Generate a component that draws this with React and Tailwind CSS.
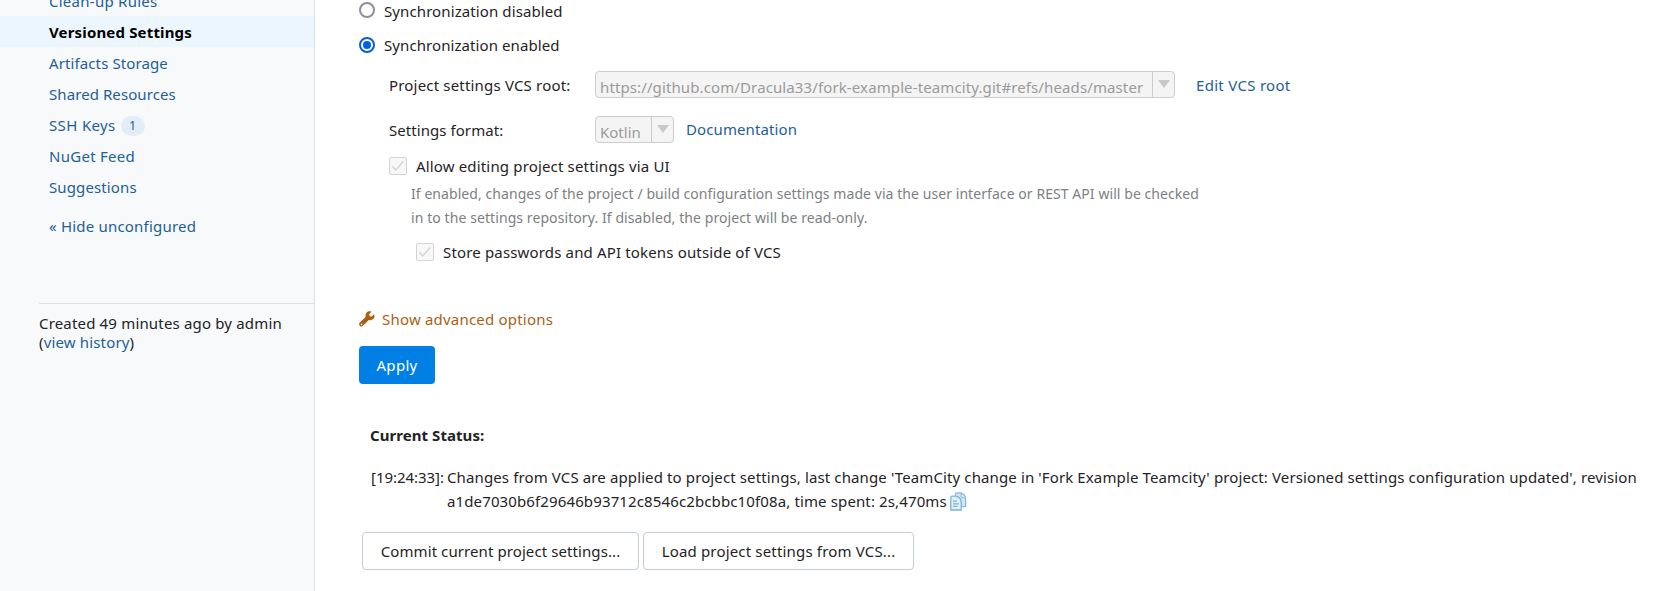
import React from "react";

const NAV = [
  { label: "Artifacts Storage", track: "tracking-[0.11px]" },
  { label: "Shared Resources", track: "tracking-[0.08px]" },
  { label: "SSH Keys", track: "tracking-[0.36px]", count: 1 },
  { label: "NuGet Feed", track: "tracking-[0.27px]" },
  { label: "Suggestions", track: "tracking-[0.12px]" },
];

function Sidebar() {
  return (
    <aside className="flex w-[315px] shrink-0 flex-col border-r border-[#dde0e5] bg-[#f7f9fb]">
      <nav className="flex flex-col text-[#1f6096]">
        <div className="-mt-[15px] flex h-[31px] items-center pl-[49px] pt-[2px]">
          <a className="tracking-[0.26px]">Clean-up Rules</a>
        </div>
        <div className="flex h-[31px] items-center bg-[#ebf6ff] pl-[49px] pt-[2px] font-bold text-black">
          <span className="tracking-[0.16px]">Versioned Settings</span>
        </div>
        {NAV.map((n) => (
          <div key={n.label} className="flex h-[31px] items-center pl-[49px] pt-[2px]">
            <a className={n.track}>{n.label}</a>
            {n.count && (
              <span className="ml-[5px] flex h-5 w-6 items-center justify-center rounded-full bg-[#e4edf7] text-[12.5px] leading-5">
                {n.count}
              </span>
            )}
          </div>
        ))}
        <div className="mt-2 flex h-[31px] items-center pl-[49px] pt-[2px]">
          <a className="tracking-[0.2px]">« Hide unconfigured</a>
        </div>
      </nav>
      <div className="ml-[39px] mt-[62px] border-t border-[#dde0e5] pt-[10px] leading-[19px] text-[#1f2326]">
        <div className="tracking-[0.17px]">Created 49 minutes ago by admin</div>
        <div className="tracking-[0.16px]">
          (<a className="text-[#1f6096]">view history</a>)
        </div>
      </div>
    </aside>
  );
}

function Radio({ checked, label, track }) {
  return (
    <div className="flex h-[22px] items-center">
      <span
        className={
          checked
            ? "mr-[9px] flex size-4 items-center justify-center rounded-full border-2 border-[#0060df]"
            : "mr-[9px] flex size-4 -translate-y-px items-center justify-center rounded-full border-2 border-[#8f8f9d]"
        }
      >
        {checked && <span className="size-2 rounded-full bg-[#0060df]" />}
      </span>
      <span className={track}>{label}</span>
    </div>
  );
}

function Check() {
  return (
    <svg width="18" height="18" viewBox="0 0 18 18" fill="none" className="mr-[9px] shrink-0">
      <rect x="0.5" y="0.5" width="17" height="17" rx="1.5" fill="#f8f8f8" stroke="#d4d4d6" />
      <path d="M3.2 9.3L6.8 13L14.2 4.5" stroke="#d4d4d6" strokeWidth="1.4" />
    </svg>
  );
}

function Select({ children, text, arrow }) {
  return (
    <div className="flex h-[27px] overflow-hidden rounded-[4px] border border-[#cdcdcd] bg-[#f4f4f4] text-[#9b9b9b]">
      <div className={`pl-1 leading-[30px] ${text}`}>{children}</div>
      <div className={`flex items-center justify-center border-l border-[#cdcdcd] pb-px ${arrow}`}>
        <svg width="12" height="8" viewBox="0 0 12 8">
          <path d="M0 0H12L6 8Z" fill="#c8c8c8" />
        </svg>
      </div>
    </div>
  );
}

function CopyIcon() {
  return (
    <svg width="17" height="19" viewBox="0 0 17 19" fill="none" className="ml-[3px] mt-[1px] shrink-0">
      <path d="M5.5 3.5V2Q5.5 0.8 6.7 0.8H10.5Q15.6 2.2 15.6 7V14.6H11.5" fill="#cfe5f4" stroke="#8bbbdb" strokeWidth="1.3" />
      <path d="M10.5 1Q12 3.2 11.2 5.2Q13.5 5 15.5 7" fill="#eef7fc" stroke="#8bbbdb" strokeWidth="1" />
      <path d="M0.8 5.4Q0.8 4.2 2 4.2H6Q11.2 5.6 11.2 10.6V18H0.8Z" fill="#e0f0fa" stroke="#7db3d6" strokeWidth="1.3" />
      <path d="M3 9.2H7M3 11.8H9M3 14.4H7.5" stroke="#7db3d6" strokeWidth="1.2" />
    </svg>
  );
}

export default function App() {
  return (
    <div className="flex h-[591px] w-[1659px] overflow-hidden whitespace-nowrap bg-white font-['Noto_Sans','Open_Sans',sans-serif] text-[15px] text-[#1f2326]">
      <Sidebar />
      <main className="flex flex-col items-start pl-[44px]">
        <Radio label="Synchronization disabled" track="tracking-[0.1px]" />
        <div className="mt-3">
          <Radio checked label="Synchronization enabled" track="tracking-[0.08px]" />
        </div>

        <div className="ml-[30px] mt-[15px] flex h-[27px] items-center">
          <span className="w-[206px] pt-[2px] tracking-[0.18px]">Project settings VCS root:</span>
          <Select text="w-[556px] tracking-[0.115px]" arrow="w-[22px]">
            https://github.com/Dracula33/fork-example-teamcity.git#refs/heads/master
          </Select>
          <a className="ml-[21px] pt-[2px] tracking-[0.3px] text-[#1f6096]">Edit VCS root</a>
        </div>

        <div className="ml-[30px] mt-[18px] flex h-[27px] items-center">
          <span className="w-[206px] pt-[2px] tracking-[0.06px]">Settings format:</span>
          <Select text="w-[55px]" arrow="w-[22px]">Kotlin</Select>
          <a className="ml-[12px] tracking-[0.1px] text-[#1f6096]">Documentation</a>
        </div>

        <div className="ml-[30px] mt-3 flex h-[22px] items-center">
          <Check />
          <span className="tracking-[0.16px]">Allow editing project settings via UI</span>
        </div>
        <div className="ml-[52px] mt-[5px] text-[14px] leading-6 text-[#7c7f83]">
          <div className="tracking-[0.066px]">
            If enabled, changes of the project / build configuration settings made via the user interface or REST API will be checked
          </div>
          <div className="tracking-[0.085px]">
            in to the settings repository. If disabled, the project will be read-only.
          </div>
        </div>
        <div className="ml-[57px] mt-[11px] flex h-[22px] items-center">
          <Check />
          <span className="tracking-[0.157px]">Store passwords and API tokens outside of VCS</span>
        </div>

        <div className="mt-[45px] flex h-[22px] items-center text-[#ab5f12]">
          <svg width="16" height="16" viewBox="0 0 16 16" className="mr-[7px]">
            <path
              d="M15.2 3.3L12.7 5.6L10.6 5.2L10.2 3.2L12.5 0.7C10.7 0 8.7 0.4 7.5 1.8C6.5 3 6.3 4.4 6.8 5.8L0.8 11.6C-0.1 12.6 -0.1 14 0.8 14.9C1.7 15.8 3.1 15.7 4 14.8L9.8 8.9C11.3 9.5 13 9.2 14.2 8.1C15.4 6.8 15.9 5 15.2 3.3ZM2.6 14.2A0.9 0.9 0 1 1 2.6 12.4A0.9 0.9 0 0 1 2.6 14.2Z"
              fill="currentColor"
            />
          </svg>
          <span className="tracking-[0.2px]">Show advanced options</span>
        </div>

        <button className="mt-4 h-[38px] w-[76px] rounded-[4px] bg-[#0080e5] tracking-[0.3px] text-white">
          Apply
        </button>

        <div className="ml-[11px] mt-10 h-[22px] font-bold leading-[22px] tracking-[0.06px]">
          Current Status:
        </div>

        <div className="ml-[12px] mt-[19px] flex leading-6">
          <span className="w-[76px] tracking-[-0.04px]">[19:24:33]:</span>
          <div>
            <div className="tracking-[0.12px]">
              Changes from VCS are applied to project settings, last change 'TeamCity change in 'Fork Example Teamcity' project: Versioned settings configuration updated', revision
            </div>
            <div className="flex items-center">
              <span className="tracking-[0.125px]">a1de7030b6f29646b93712c8546c2bcbbc10f08a, time spent: 2s,470ms</span>
              <CopyIcon />
            </div>
          </div>
        </div>

        <div className="ml-[3px] mt-[19px] flex gap-1">
          <button className="h-[38px] w-[277px] rounded-[4px] border border-[#c3ccd5] bg-white tracking-[0.09px]">
            Commit current project settings...
          </button>
          <button className="h-[38px] w-[271px] rounded-[4px] border border-[#c3ccd5] bg-white tracking-[0.17px]">
            Load project settings from VCS...
          </button>
        </div>
      </main>
    </div>
  );
}
